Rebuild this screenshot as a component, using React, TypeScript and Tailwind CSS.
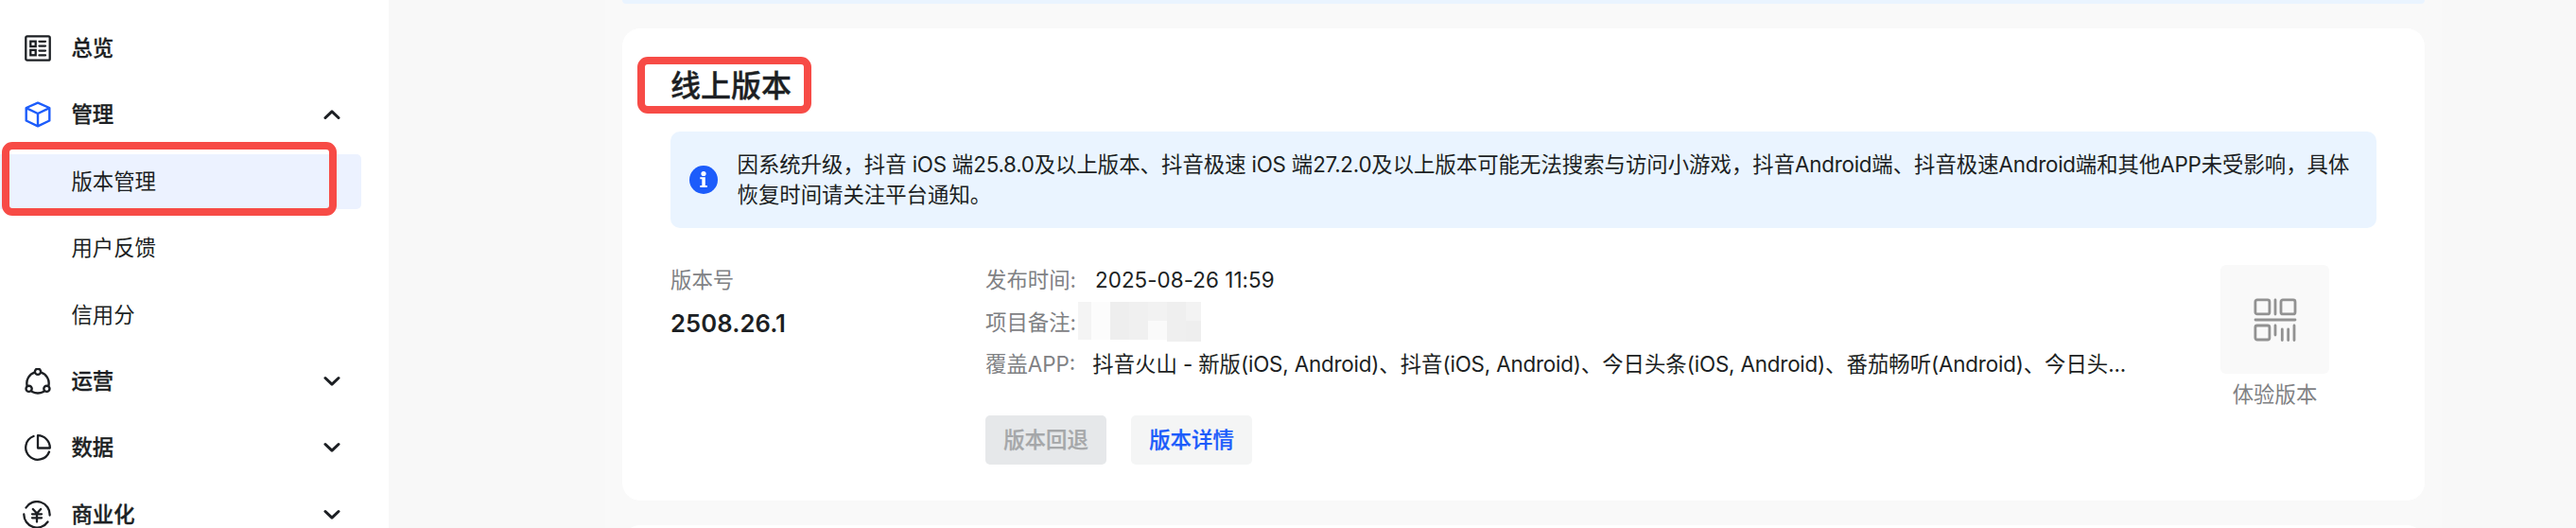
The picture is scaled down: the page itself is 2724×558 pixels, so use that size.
import React from "react";

type NavItem = { label: string; icon?: React.ReactNode; arrow?: "up" | "down"; active?: boolean };

const OverviewIcon = () => (
  <svg width="28" height="28" viewBox="0 0 28 28" fill="none" stroke="currentColor" strokeWidth="2.3">
    <rect x="1.3" y="1.3" width="25.4" height="25.4" rx="1.5" />
    <rect x="6.3" y="6.7" width="5.4" height="5.4" />
    <rect x="6.3" y="15.9" width="5.4" height="5.4" />
    <path d="M15.5 6.8h6.5M15.5 11.6h6.5M15.5 16.6h6.5M15.5 21.4h6.5" strokeLinecap="round" />
  </svg>
);

const CubeIcon = () => (
  <svg width="28" height="28" viewBox="0 0 28 28" fill="none" stroke="#1c5cfb" strokeWidth="2.4" strokeLinejoin="round">
    <path d="M14 1.7 26.3 7v13.5L14 26.3 1.7 20.5V7zM1.7 7.2 14 13l12.3-5.8M14 13v13" />
  </svg>
);

const OperateIcon = () => (
  <svg width="28" height="28" viewBox="0 0 28 28" fill="none" stroke="currentColor" strokeWidth="2.4" strokeLinecap="round">
    <circle cx="14" cy="3.8" r="3.1" />
    <circle cx="4.6" cy="21.8" r="3.1" />
    <circle cx="23.4" cy="21.8" r="3.1" />
    <path d="M10.5 4.6A12 12 0 0 0 2.6 18.4M17.5 4.6A12 12 0 0 1 25.4 18.4M8 25a13 13 0 0 0 12 0" />
  </svg>
);

const DataIcon = () => (
  <svg width="28" height="28" viewBox="0 0 28 28" fill="none" stroke="currentColor" strokeWidth="2.3" strokeLinecap="round">
    <path d="M9.5 2A12.8 12.8 0 1 0 26 18.5" />
    <path d="M14 1.2V14.5H26.8A13 13 0 0 0 14 1.2z" strokeLinejoin="round" />
  </svg>
);

const MoneyIcon = () => (
  <svg className="-ml-[2px]" width="30" height="30" viewBox="0 0 30 30" fill="none" stroke="currentColor" strokeWidth="2.3" strokeLinecap="round">
    <path d="M3.5 7.5A13.6 13.6 0 0 1 28.6 15.5M1.3 14.5A13.8 13.8 0 0 0 26.5 22.5" />
    <path d="M10.8 9 15 13.5l4.2-4.5M10 14.3h10M10 18.3h10M15 14v8.5" />
  </svg>
);

const Chevron = ({ up }: { up: boolean }) => (
  <svg width="18" height="12" viewBox="0 0 18 12" fill="none" stroke="currentColor" strokeWidth="3" strokeLinecap="round" strokeLinejoin="round">
    <path d={up ? "M2 9.5 9 2.8l7 6.7" : "M2 2.5l7 6.7 7-6.7"} />
  </svg>
);

const items: NavItem[] = [
  { label: "总览", icon: <OverviewIcon /> },
  { label: "管理", icon: <CubeIcon />, arrow: "up" },
  { label: "版本管理", active: true },
  { label: "用户反馈" },
  { label: "信用分" },
  { label: "运营", icon: <OperateIcon />, arrow: "down" },
  { label: "数据", icon: <DataIcon />, arrow: "down" },
  { label: "商业化", icon: <MoneyIcon />, arrow: "down" },
];

const Sidebar = () => (
  <aside className="flex h-full w-[411px] shrink-0 flex-col gap-[12.8px] bg-white pt-[22.2px]">
    {items.map((it) => (
      <div
        key={it.label}
        className={
          "relative flex h-[57.6px] w-[382px] shrink-0 items-center rounded-r-[5px] " + (it.active ? "bg-[#ecf2ff]" : "")
        }
      >
        <span className="flex w-[75.4px] shrink-0 items-center justify-center pl-[4.6px]">{it.icon}</span>
        <span className={it.icon ? "flex-1 font-medium [-webkit-text-stroke:0.3px_currentColor]" : "flex-1"}>{it.label}</span>
        {it.arrow && (
          <span className="mr-[22px]">
            <Chevron up={it.arrow === "up"} />
          </span>
        )}
        {it.active && (
          <span className="absolute top-[-13px] left-[2px] h-[78px] w-[354px] rounded-[11px] border-8 border-[#f74b46]" />
        )}
      </div>
    ))}
  </aside>
);

const InfoIcon = () => (
  <svg className="shrink-0" width="30" height="30" viewBox="0 0 30 30">
    <circle cx="15" cy="15" r="15" fill="#1c5cfb" />
    <circle cx="15" cy="8.5" r="2.6" fill="#fff" />
    <path d="M11.3 12.3h5.5v8.7h2v2h-7.5v-2h2v-6.7h-2z" fill="#fff" />
  </svg>
);

const QrIcon = () => (
  <svg width="46" height="46" viewBox="0 0 46 46" fill="none" stroke="#929292" strokeWidth="2.8" strokeLinecap="round">
    <rect x="1.9" y="1.9" width="15" height="15" rx="2" />
    <rect x="29" y="1.9" width="15" height="15" rx="2" />
    <rect x="1.9" y="29" width="15" height="15" rx="2" />
    <path d="M23 2v15M2 23h42M23 29v10M30.3 33v11.5M36.7 33v11.5M43 29v15.5" />
  </svg>
);

const Mosaic = () => (
  <span className="-mt-[6px] flex h-[42px] w-[130px]">
    <span className="h-[40px] w-[14px] bg-[#f4f4f4]" />
    <span className="h-[40px] w-[20px] bg-[#fcfcfc]" />
    <span className="h-[40px] w-[20px] bg-[#eeeeee]" />
    <span className="h-[40px] w-[20px] bg-[#f0f0f0]" />
    <span className="flex h-[40px] w-[20px] flex-col bg-[#fafafa]">
      <span className="h-[20px] bg-[#f2f2f2]" />
    </span>
    <span className="w-[20px] bg-[#efefef]" />
    <span className="flex w-[16px] flex-col bg-[#eeeeee]">
      <span className="h-[20px] bg-[#f3f3f3]" />
    </span>
  </span>
);

const Mixed = ({ text, latin }: { text: string; latin: string }) => (
  <>
    {text.split(/([ -~]+)/).map((part, i) =>
      i % 2 ? (
        <span key={i} className={latin}>
          {part}
        </span>
      ) : (
        part
      ),
    )}
  </>
);

const Label = ({ children }: { children: React.ReactNode }) => <span className="shrink-0 text-[#7f8184]">{children}</span>;

export default function App() {
  return (
    <div className="flex h-[558px] w-[2724px] overflow-hidden bg-[#f8f8f8] font-[Inter,'Noto_Sans_CJK_SC',sans-serif] text-[22.4px] leading-[32px] whitespace-nowrap text-[#1c1f23]">
      <Sidebar />
      <main className="ml-[229px] flex w-[1942px] flex-col bg-[#f9f9f9] pl-[18px]">
        <div className="h-[4px] w-[1906px] shrink-0 rounded-b-[6px] bg-[#eaf4ff]" />
        <section className="mt-[26px] flex h-[499px] w-[1906px] shrink-0 flex-col rounded-[19px] bg-white px-[51px] pt-[30px]">
          <div className="-ml-[35px] flex h-[60px] w-[184px] shrink-0 items-center rounded-[11px] border-8 border-[#f74b46] pt-[2px] pl-[27px]">
            <h1 className="text-[32px] leading-[44px] font-medium [-webkit-text-stroke:0.4px_currentColor]">线上版本</h1>
          </div>
          <div className="mt-[19px] flex h-[102px] shrink-0 items-center rounded-[10px] bg-[#eaf4ff] pr-[20px] pl-[20px]">
            <InfoIcon />
            <p className="ml-[20.5px]">
              <Mixed
                latin="tracking-[-0.26px]"
                text="因系统升级，抖音 iOS 端25.8.0及以上版本、抖音极速 iOS 端27.2.0及以上版本可能无法搜索与访问小游戏，抖音Android端、抖音极速Android端和其他APP未受影响，具体"
              />
              <br />
              恢复时间请关注平台通知。
            </p>
          </div>
          <div className="mt-[39px] flex">
            <div className="w-[333px] shrink-0">
              <div className="text-[#7f8184]">版本号</div>
              <div className="mt-[12px] text-[25.6px] leading-[36px] font-semibold tracking-[0.1px]">2508.26.1</div>
            </div>
            <div className="flex w-[1306px] flex-col">
              <div className="flex h-[44.5px] items-start gap-[20px]">
                <Label>发布时间:</Label>
                <span className="tracking-[0.05px]">2025-08-26 11:59</span>
              </div>
              <div className="flex h-[44.5px] items-start gap-[2px]">
                <Label>项目备注:</Label>
                <Mosaic />
              </div>
              <div className="flex items-start gap-[18px]">
                <Label>覆盖APP:</Label>
                <span>
                  <Mixed
                    latin="tracking-[-0.19px]"
                    text="抖音火山 - 新版(iOS, Android)、抖音(iOS, Android)、今日头条(iOS, Android)、番茄畅听(Android)、今日头..."
                  />
                </span>
              </div>
              <div className="mt-[38px] flex gap-[26px] font-medium [-webkit-text-stroke:0.25px_currentColor]">
                <button className="h-[52px] w-[128px] rounded-[5px] bg-[#e6e8ea] text-[#a5a7a9]">版本回退</button>
                <button className="h-[52px] w-[128px] rounded-[5px] bg-[#f4f5f5] text-[#1c5cfb]">版本详情</button>
              </div>
            </div>
            <div className="flex w-[115px] shrink-0 flex-col items-center gap-[6px] text-[#7f8184]">
              <div className="flex h-[115px] w-[115px] items-center justify-center rounded-[6px] bg-[#f9f9f9]">
                <QrIcon />
              </div>
              <span>体验版本</span>
            </div>
          </div>
        </section>
        <section className="mt-[26px] h-[40px] w-[1906px] shrink-0 rounded-t-[19px] bg-white" />
      </main>
    </div>
  );
}
